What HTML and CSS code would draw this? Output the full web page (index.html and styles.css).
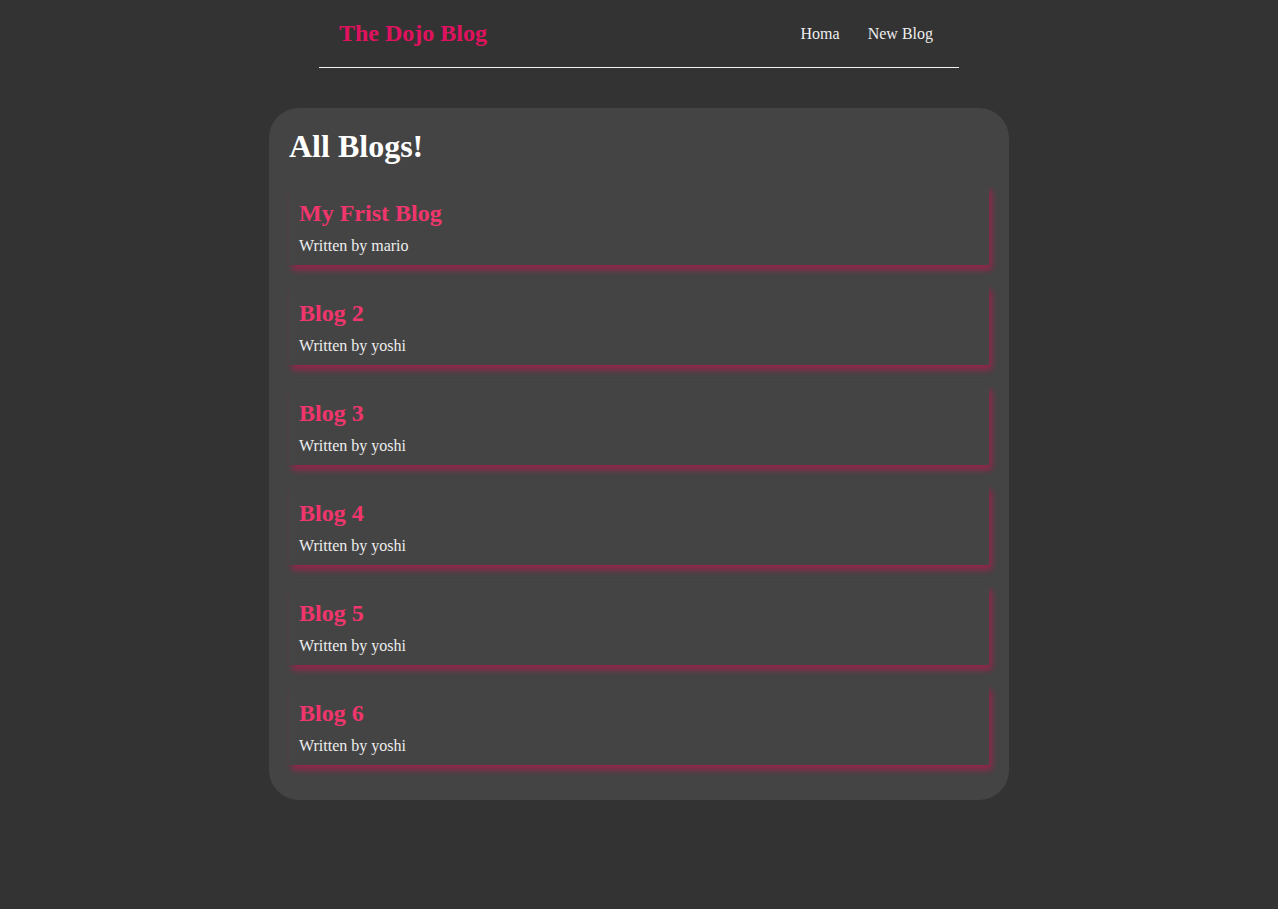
FILE: index.html
```html
<!DOCTYPE html>
<html lang="en">
<head>
<meta charset="utf-8">
<title>The Dojo Blog</title>
<link rel="stylesheet" href="styles.css">
</head>
<body>
  <nav class="navbar">
    <h1 class="brand">The Dojo Blog</h1>
    <div class="links">
      <a href="#">Homa</a>
      <a href="#">New Blog</a>
    </div>
  </nav>
  <main class="content">
    <h1 class="page-title">All Blogs!</h1>
    <div class="blog-preview">
      <h2>My Frist Blog</h2>
      <p>Written by mario</p>
    </div>
    <div class="blog-preview">
      <h2>Blog 2</h2>
      <p>Written by yoshi</p>
    </div>
    <div class="blog-preview">
      <h2>Blog 3</h2>
      <p>Written by yoshi</p>
    </div>
    <div class="blog-preview">
      <h2>Blog 4</h2>
      <p>Written by yoshi</p>
    </div>
    <div class="blog-preview">
      <h2>Blog 5</h2>
      <p>Written by yoshi</p>
    </div>
    <div class="blog-preview">
      <h2>Blog 6</h2>
      <p>Written by yoshi</p>
    </div>
  </main>
</body>
</html>
```
FILE: styles.css
```css
html, body {
  margin: 0;
  background: #333333;
  font-family: "Liberation Serif", "Times New Roman", serif;
  color: #eeeeee;
}
.navbar {
  display: flex;
  align-items: center;
  max-width: 600px;
  margin: 0 auto;
  padding: 20px;
  border-bottom: 1px solid #f2f2f2;
}
.brand {
  margin: 0;
  font-size: 24px;
  line-height: 27px;
  font-weight: bold;
  color: #e0115f;
}
.links {
  margin-left: auto;
  display: flex;
}
.links a {
  margin-left: 16px;
  padding: 0 6px;
  line-height: 18px;
  text-decoration: none;
  color: #eeeeee;
  font-size: 16px;
}
.content {
  display: block;
  max-width: 700px;
  margin: 40px auto;
  padding: 20px 20px 35px;
  background: #444444;
  border-radius: 30px;
}
.page-title {
  margin: 0;
  font-size: 32px;
  line-height: 37px;
  font-weight: bold;
  color: #ffffff;
}
.blog-preview {
  margin-top: 20px;
  padding: 14px 10px 10px;
  box-shadow: 3px 5px 6px rgba(205, 15, 80, 0.55);
}
.blog-preview h2 {
  margin: 0 0 10px;
  font-size: 24px;
  line-height: 28px;
  font-weight: bold;
  color: #f1356d;
}
.blog-preview p {
  margin: 0;
  font-size: 16px;
  line-height: 18px;
  color: #eeeeee;
}
```
